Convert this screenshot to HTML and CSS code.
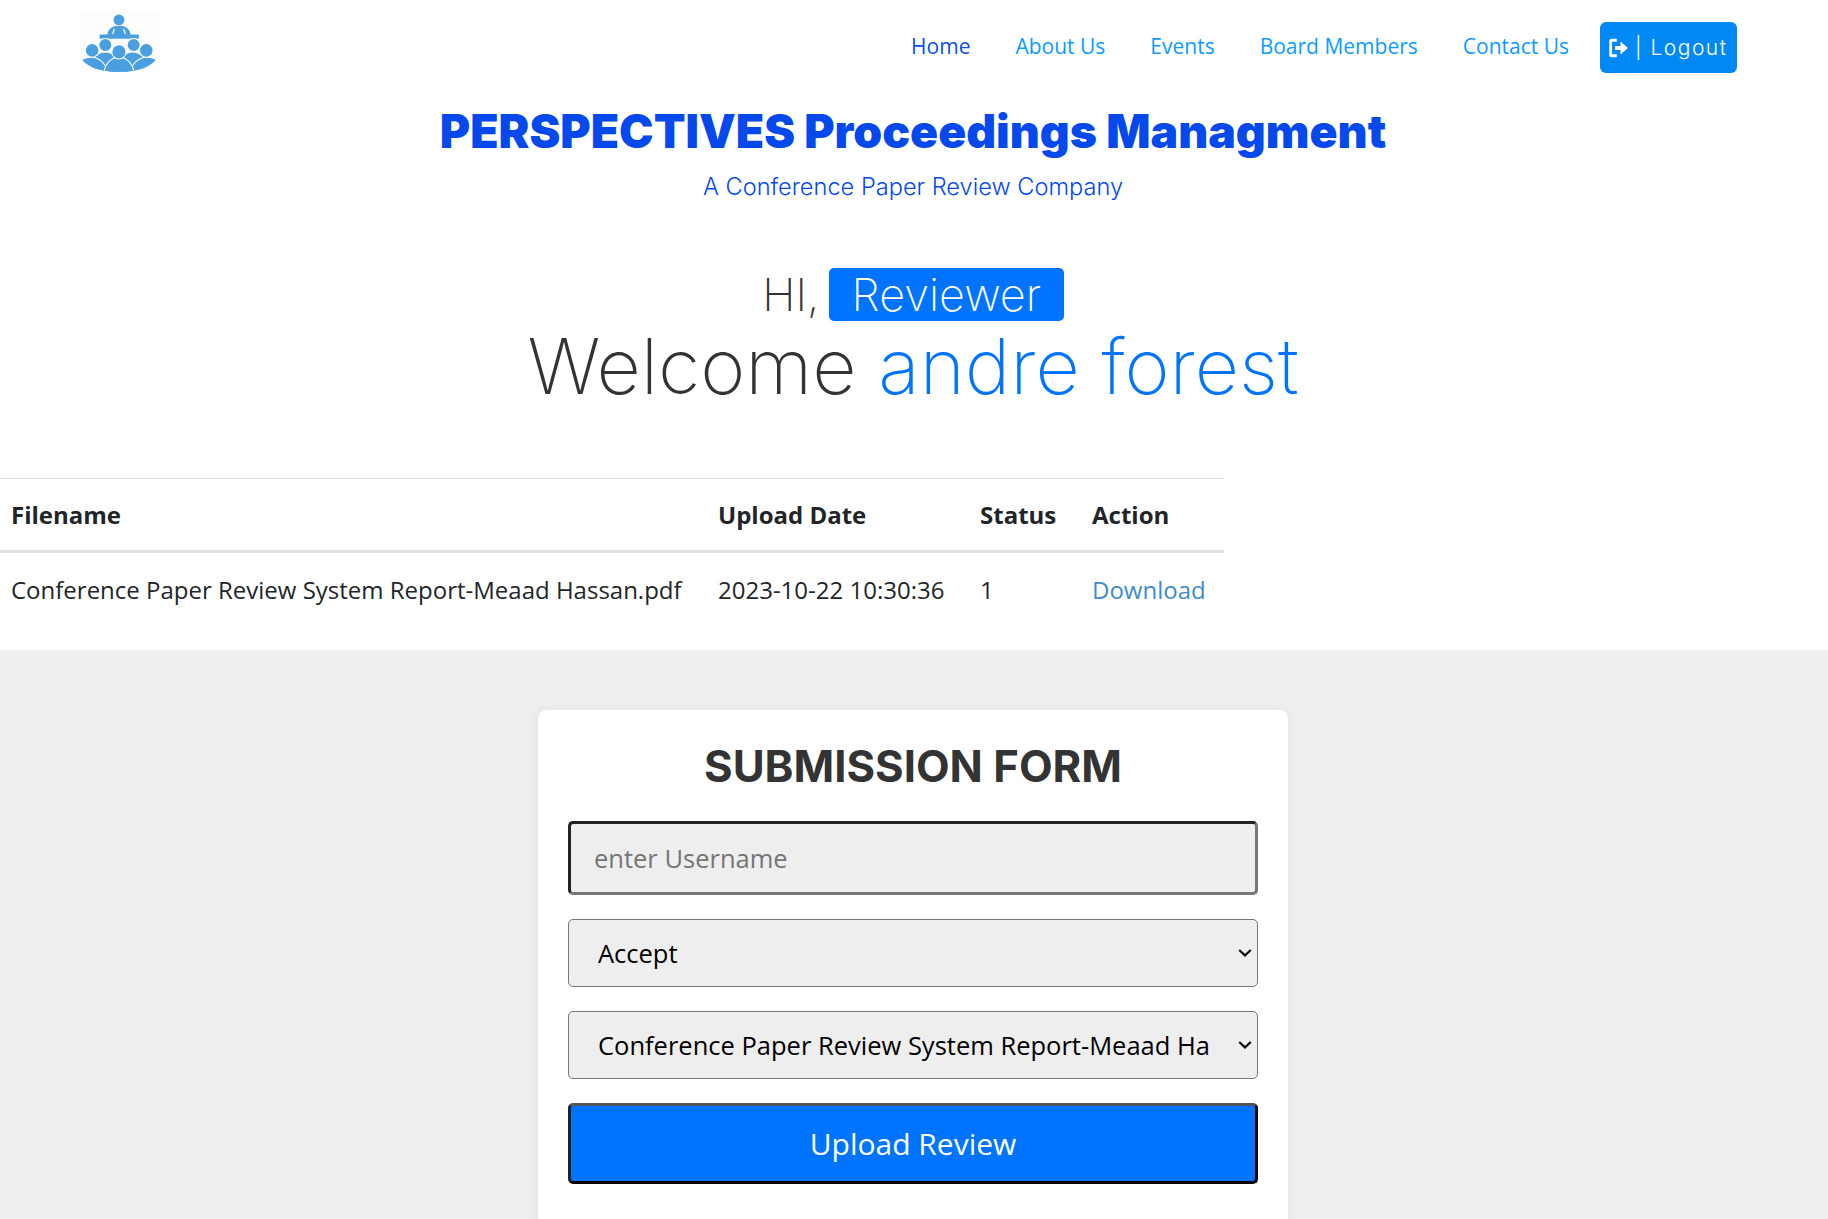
FILE: index.html
```html
<!DOCTYPE html>
<html lang="en">
<head>
<meta charset="utf-8">
<title>PERSPECTIVES Proceedings Managment</title>
<link rel="stylesheet" href="styles.css">
</head>
<body>
<header class="topbar">
  <a class="logo" href="#">
    <svg class="logo-svg" viewBox="82 13 76 59" width="80" height="62" aria-label="logo">
      <defs>
        <clipPath id="bowl"><path d="M83 57C88 66 104 70 119 70S150 66 155 57V40H83z"/></clipPath>
      </defs>
      <rect x="82" y="13" width="76" height="59" fill="#fdfdfd"/>
      <g fill="#4a9fe0">
        <circle cx="119" cy="20.500" r="5.200"/>
        <path d="M108 35c0-6 5-9 11-9s11 3 11 9z"/>
        <rect x="100.500" y="34.500" width="37.500" height="4" rx="1"/>
      </g>
      <path d="M114.500 29l-1.500 5M123.500 29l1.500 5" stroke="#fdfdfd" stroke-width="1.200" fill="none"/>
      <g clip-path="url(#bowl)" fill="#4a9fe0" stroke="#fdfdfd" stroke-width="1">
        <ellipse cx="106" cy="64" rx="13" ry="13"/>
        <ellipse cx="132" cy="64" rx="13" ry="13"/>
        <ellipse cx="92" cy="72" rx="16" ry="16"/>
        <ellipse cx="146" cy="72" rx="16" ry="16"/>
        <ellipse cx="119" cy="73" rx="14.500" ry="17"/>
      </g>
      <g fill="#4a9fe0" stroke="#fdfdfd" stroke-width="1">
        <circle cx="106" cy="44.500" r="6.200"/>
        <circle cx="133" cy="44.500" r="6.200"/>
        <circle cx="93.500" cy="49.500" r="6.500"/>
        <circle cx="145" cy="49.500" r="6.500"/>
        <circle cx="119" cy="51" r="6.800"/>
      </g>
    </svg>
  </a>
  <nav class="nav">
    <a class="nav-link active" href="#">Home</a>
    <a class="nav-link" href="#">About Us</a>
    <a class="nav-link" href="#">Events</a>
    <a class="nav-link" href="#">Board Members</a>
    <a class="nav-link" href="#">Contact Us</a>
    <a class="logout" href="#">
      <svg class="logout-icon" viewBox="0 0 18 18" width="20" height="20" aria-hidden="true">
        <path d="M7 2H2.500A1 1 0 0 0 1.500 3v12a1 1 0 0 0 1 1H7" fill="none" stroke="#fff" stroke-width="2.600"/>
        <path d="M5.500 7.200h4.800V3.200L17 9l-6.700 5.800v-4H5.500z" fill="#fff"/>
      </svg>
      <span>| Logout</span>
    </a>
  </nav>
</header>

<section class="brand">
  <h1 class="brand-title">PERSPECTIVES Proceedings Managment</h1>
  <p class="brand-sub">A Conference Paper Review Company</p>
</section>

<section class="welcome">
  <h2 class="hi">HI, <span class="role">Reviewer</span></h2>
  <h1 class="welcome-line">Welcome <span class="name">andre forest</span></h1>
</section>

<table class="files">
  <colgroup>
    <col class="col-file"><col class="col-date"><col class="col-status"><col class="col-action">
  </colgroup>
  <thead>
    <tr><th>Filename</th><th>Upload Date</th><th>Status</th><th>Action</th></tr>
  </thead>
  <tbody>
    <tr>
      <td>Conference Paper Review System Report-Meaad Hassan.pdf</td>
      <td>2023-10-22 10:30:36</td>
      <td>1</td>
      <td><a class="dl" href="#">Download</a></td>
    </tr>
  </tbody>
</table>

<section class="form-area">
  <form class="card">
    <h2 class="card-title">SUBMISSION FORM</h2>
    <input class="field" type="text" placeholder="enter Username">
    <div class="pick-wrap">
      <select class="pick">
        <option>Accept</option>
        <option>Reject</option>
      </select>
      <svg class="chev" viewBox="0 0 14 8" width="14" height="8" aria-hidden="true"><path d="M1.200 1L7 6.400 12.800 1" fill="none" stroke="#111" stroke-width="2.200"/></svg>
    </div>
    <div class="pick-wrap">
      <select class="pick">
        <option>Conference Paper Review System Report-Meaad Hassan.pdf</option>
      </select>
      <svg class="chev" viewBox="0 0 14 8" width="14" height="8" aria-hidden="true"><path d="M1.200 1L7 6.400 12.800 1" fill="none" stroke="#111" stroke-width="2.200"/></svg>
    </div>
    <button class="submit" type="button">Upload Review</button>
  </form>
</section>
</body>
</html>
```

FILE: styles.css
```css
* { box-sizing: border-box; }
html, body { margin: 0; padding: 0; }
body { background: #fff; font-family: "Open Sans", sans-serif; color: #212529; }

.topbar { display: flex; align-items: flex-start; justify-content: space-between; padding: 12px 91px 0 80px; height: 102px; }
.logo { display: block; height: 62px; }
.logo-svg { display: block; }
.nav { display: flex; align-items: center; padding-top: 10px; }
.nav-link { font-size: 21px; line-height: 27px; margin-top: -2px; color: #0d9bff; text-decoration: none; margin-right: 45px; }
.nav-link.active { color: #0b4fe8; }
.nav-link:nth-child(5) { margin-right: 31px; }
.logout { display: flex; align-items: center; gap: 6px; width: 137px; height: 51px; padding-left: 9px; background: #0088f5; color: #fff; border-radius: 6px; text-decoration: none; font-family: Inter, sans-serif; font-weight: 300; font-size: 21px; letter-spacing: 1.5px; }
.logout-icon { display: block; }

.brand { text-align: center; padding-right: 2px; }
.brand-title { margin: 0; font-family: Inter, sans-serif; font-weight: 900; font-size: 46.3px; line-height: 58px; color: #0549ec; }
.brand-sub { margin: 11px 0 0; font-family: Inter, sans-serif; font-weight: 300; font-size: 23.6px; line-height: 32px; color: #0549ec; }

.welcome { text-align: center; margin-top: 65px; padding-right: 2px; }
.hi { margin: 0 0 2px; font-family: Inter, sans-serif; font-weight: 200; font-size: 45px; line-height: 53px; color: #333; }
.role { display: inline-block; background: #0073ff; color: #fff; border-radius: 5px; padding: 0 22.5px; margin-left: -3px; }
.welcome-line { margin: 0; font-family: Inter, sans-serif; font-weight: 200; font-size: 77px; line-height: 87px; color: #333; }
.name { color: #0073ff; }

.files { width: 1224px; margin-top: 68px; border-collapse: collapse; table-layout: fixed; font-size: 24px; }
.col-file { width: 707px; }
.col-date { width: 262px; }
.col-status { width: 112px; }
.col-action { width: 143px; }
.files th, .files td { padding: 12px 11px; text-align: left; vertical-align: top; }
.files th { font-weight: 700; height: 73px; padding-top: 19px; border-top: 1px solid #dee2e6; border-bottom: 3px solid #dee2e6; }
.files td { height: 98px; padding-top: 20px; }
.dl { color: #3d8ccc; text-decoration: none; }

.form-area { background: #eee; height: 570px; padding: 60px 2px 0 0; overflow: hidden; }
.card { width: 750px; height: 640px; margin: 0 auto; padding: 31px 30px; background: #fff; border-radius: 8px; box-shadow: 0 0 8px rgba(0, 0, 0, .06); }
.card-title { margin: 0 0 28px; text-align: center; font-family: Inter, sans-serif; font-weight: 700; font-size: 43.7px; line-height: 52px; color: #333; }
.field, .pick, .submit { display: block; width: 100%; font-family: "Open Sans", sans-serif; }
.field { height: 74px; margin-bottom: 24px; padding: 0 23px; font-size: 25.5px; background: #eee; border: 3px solid; border-color: #222 #777 #777 #222; border-radius: 5px; }
.field::placeholder { color: #757575; }
.pick-wrap { position: relative; margin-bottom: 24px; }
.pick { height: 68px; padding: 0 47px 0 29px; font-size: 25.5px; appearance: none; background: #eee; border: 1px solid #767676; border-radius: 5px; color: #000; }
.chev { position: absolute; right: 6px; top: 30px; }
.submit { height: 81px; font-size: 30px; background: #0073ff; color: #fff; border: 3px solid; border-color: #555 #000 #000 #222; border-radius: 5px; }
```
